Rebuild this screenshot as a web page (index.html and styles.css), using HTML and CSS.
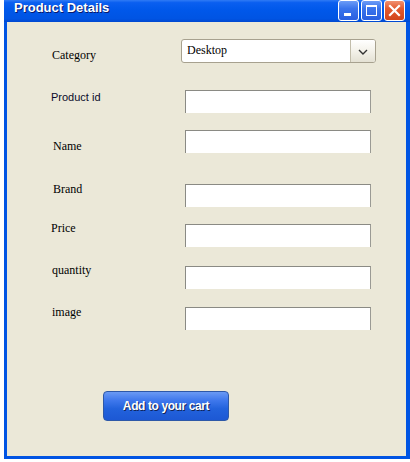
FILE: index.html
```html
<!DOCTYPE html>
<html>
<head>
<meta charset="utf-8">
<link rel="stylesheet" href="styles.css">
</head>
<body>
<div class="window">
  <div class="titlebar">
    <span class="title">Product Details</span>
    <div class="controls">
      <span class="ctl ctl-blue"><svg width="19" height="19" viewBox="0 0 19 19"><rect x="5" y="12" width="7" height="3" fill="#fff"/></svg></span>
      <span class="ctl ctl-blue"><svg width="19" height="19" viewBox="0 0 19 19"><rect x="4.5" y="4.5" width="10" height="10" fill="none" stroke="#fff" stroke-width="1"/><rect x="4" y="4" width="11" height="2" fill="#fff"/></svg></span>
      <span class="ctl ctl-close"><svg width="19" height="19" viewBox="0 0 19 19"><path d="M5 5 L14 14 M14 5 L5 14" stroke="#fff" stroke-width="2.2" stroke-linecap="square"/></svg></span>
    </div>
  </div>
  <div class="client">
    <div class="row row-select r1">
      <span class="lbl serif pl45 o10">Category</span>
      <div class="combo">
        <span class="combo-text">Desktop</span>
        <span class="combo-btn"><svg width="10" height="6" viewBox="0 0 10 6"><path d="M1 1 L5 5 L9 1" fill="none" stroke="#333" stroke-width="1.4"/></svg></span>
      </div>
    </div>
    <div class="row r2">
      <span class="lbl sans pl44 o1">Product id</span>
      <div class="field"></div>
    </div>
    <div class="row r3">
      <span class="lbl serif pl46 o10">Name</span>
      <div class="field"></div>
    </div>
    <div class="row r4">
      <span class="lbl serif pl46 om1">Brand</span>
      <div class="field"></div>
    </div>
    <div class="row r5">
      <span class="lbl serif pl44 om2">Price</span>
      <div class="field"></div>
    </div>
    <div class="row r6">
      <span class="lbl serif pl45 om2">quantity</span>
      <div class="field"></div>
    </div>
    <div class="row r7">
      <span class="lbl serif pl45 om1">image</span>
      <div class="field"></div>
    </div>
    <div class="actions">
      <button class="btn">Add to your cart</button>
    </div>
  </div>
</div>
</body>
</html>
```
FILE: styles.css
```css
html, body {
  margin: 0;
  padding: 0;
  background: #ffffff;
}
.window {
  margin-left: 4px;
  width: 406px;
  height: 459px;
  display: flex;
  flex-direction: column;
}
.titlebar {
  height: 22px;
  flex: none;
  display: flex;
  align-items: flex-start;
  background: linear-gradient(to bottom, #2f7bf5 0%, #0a5ff0 12%, #0058ea 45%, #0054e3 85%, #0048d0 100%);
  box-sizing: border-box;
}
.title {
  font-family: "Liberation Sans", Arial, sans-serif;
  font-weight: bold;
  font-size: 13px;
  line-height: 16px;
  color: #ffffff;
  margin-left: 10px;
  margin-top: 0px;
  text-shadow: 1px 1px 0 #0a1a6a;
}
.controls {
  margin-left: auto;
  display: flex;
  gap: 2px;
  margin-right: 5px;
}
.ctl {
  width: 19px;
  height: 19px;
  border: 1px solid #ffffff;
  border-radius: 3px;
  display: block;
}
.ctl svg { display: block; }
.ctl-blue {
  background: linear-gradient(to bottom, #6c9cf7 0%, #3a74ec 40%, #2a5fe0 100%);
}
.ctl-close {
  background: linear-gradient(to bottom, #f09070 0%, #e35a2f 40%, #d2451b 100%);
}
.client {
  flex: 1;
  background: #ebe8d8;
  border-left: 3px solid #0054e3;
  border-right: 4px solid #0054e3;
  border-bottom: 3px solid #0054e3;
  padding-top: 17px;
  display: flex;
  flex-direction: column;
}
.row {
  display: grid;
  grid-template-columns: 178px 186px;
  align-items: start;
}
.row-select {
  grid-template-columns: 174px 195px;
}
.r2 { margin-top: 27px; }
.r3 { margin-top: 17px; }
.r4 { margin-top: 31px; }
.r5 { margin-top: 17px; }
.r6 { margin-top: 19px; }
.r7 { margin-top: 18px; }
.lbl {
  line-height: 12px;
  color: #000000;
}
.serif {
  font-family: "Liberation Serif", "Times New Roman", serif;
  font-size: 12px;
}
.sans {
  font-family: "Liberation Sans", Arial, sans-serif;
  font-size: 11px;
  color: #0a0a2a;
}
.pl44 { padding-left: 44px; }
.pl45 { padding-left: 45px; }
.pl46 { padding-left: 46px; }
.o10 { margin-top: 10px; }
.o1 { margin-top: 1px; }
.om1 { margin-top: -1px; }
.om2 { margin-top: -2px; }
.field {
  height: 23px;
  background: #ffffff;
  border-top: 1px solid #8a8a84;
  border-left: 1px solid #8a8a84;
  border-right: 1px solid #9a9a94;
  box-sizing: border-box;
}
.combo {
  height: 24px;
  box-sizing: border-box;
  border: 1px solid #a7a18f;
  border-radius: 3px;
  background: #ffffff;
  display: flex;
  overflow: hidden;
}
.combo-text {
  flex: 1;
  font-family: "Liberation Serif", "Times New Roman", serif;
  font-size: 12px;
  line-height: 21px;
  padding-left: 5px;
  color: #000000;
}
.combo-btn {
  width: 24px;
  border-left: 1px solid #c2bdab;
  background: linear-gradient(to bottom, #ffffff 0%, #f4f2ea 50%, #e4e1d4 100%);
  display: flex;
  align-items: center;
  justify-content: center;
}
.combo-btn svg { display: block; margin-top: 1px; }
.actions {
  margin-top: 61px;
  padding-left: 96px;
}
.btn {
  width: 126px;
  height: 30px;
  box-sizing: border-box;
  border: 1px solid #2d58a8;
  border-radius: 4px;
  background: linear-gradient(to bottom, #6a9af4 0%, #3f78ec 30%, #2262dc 60%, #1d58d4 100%);
  color: #ffffff;
  font-family: "Liberation Sans", Arial, sans-serif;
  font-weight: bold;
  font-size: 12px;
  letter-spacing: -0.4px;
  text-shadow: 1px 1px 0 #10255a;
  padding: 0;
  display: block;
}
```
